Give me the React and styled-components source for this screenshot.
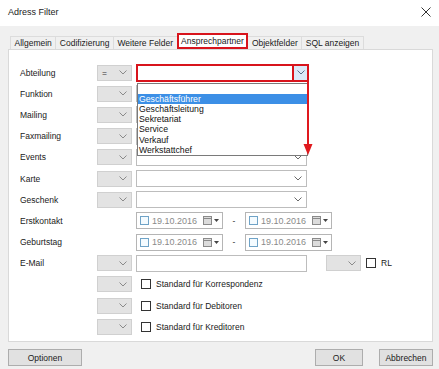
import React from 'react';
import styled, { createGlobalStyle } from 'styled-components';

const GlobalStyle = createGlobalStyle`
  html, body {
    margin: 0;
    padding: 0;
    background: #f0f0f0;
  }
  body {
    font-family: "Liberation Sans", Arial, sans-serif;
    font-size: 8.5px;
    color: #1a1a1a;
  }
`;

const TABS = ['Allgemein', 'Codifizierung', 'Weitere Felder', 'Ansprechpartner', 'Objektfelder', 'SQL anzeigen'];
const ABTEILUNGEN = ['', 'Geschäftsführer', 'Geschäftsleitung', 'Sekretariat', 'Service', 'Verkauf', 'Werkstattchef'];

function Chevron({ color }) {
  return (
    <svg width="8" height="5" viewBox="0 0 8 5">
      <path d="M0.5 0.5 L4 4 L7.5 0.5" fill="none" stroke={color || '#6a6a6a'} strokeWidth="1" />
    </svg>
  );
}

function CalendarIcon() {
  return (
    <CalWrap>
      <svg width="9" height="9" viewBox="0 0 9 9">
        <rect x="0.5" y="0.5" width="8" height="8" fill="#dcdcdc" stroke="#8a8a8a" />
        <line x1="0.5" y1="2.5" x2="8.5" y2="2.5" stroke="#8a8a8a" />
      </svg>
      <svg width="5" height="3" viewBox="0 0 5 3">
        <path d="M0 0 L5 0 L2.5 3 Z" fill="#444" />
      </svg>
    </CalWrap>
  );
}

function OpCombo({ value }) {
  return (
    <GrayCombo>
      <span>{value}</span>
      <Chevron color="#8a8a8a" />
    </GrayCombo>
  );
}

function DateBox() {
  return (
    <DateField>
      <SmallCheck $blue />
      <DateText>19.10.2016</DateText>
      <CalendarIcon />
    </DateField>
  );
}

function Row({ label, op, children }) {
  return (
    <>
      <Label>{label}</Label>
      {op === null ? <span /> : <OpCombo value={op} />}
      <Field>{children}</Field>
    </>
  );
}

export default function App() {
  return (
    <Window>
      <GlobalStyle />
      <TitleBar>
        <Title>Adress Filter</Title>
        <svg width="10" height="10" viewBox="0 0 10 10">
          <path d="M0.5 0.5 L9.5 9.5 M9.5 0.5 L0.5 9.5" stroke="#333" strokeWidth="1" />
        </svg>
      </TitleBar>
      <Body>
        <TabStrip>
          {TABS.map((t) => (
            <Tab key={t} $active={t === 'Ansprechpartner'}>{t}</Tab>
          ))}
        </TabStrip>
        <Panel>
          <Form>
            <Row label="Abteilung" op="=">
              <Highlighted>
                <RedInput />
                <RedButton><Chevron color="#5a6f8a" /></RedButton>
                <DropList>
                  {ABTEILUNGEN.map((a, i) => (
                    <DropItem key={a || i} $selected={i === 1}>{a}</DropItem>
                  ))}
                </DropList>
                <Arrow width="12" height="76" viewBox="0 0 12 76">
                  <line x1="6" y1="0" x2="6" y2="66" stroke="#e0191e" strokeWidth="2" />
                  <path d="M1.5 62 L10.5 62 L6 73 Z" fill="#e0191e" />
                </Arrow>
              </Highlighted>
            </Row>
            <Row label="Funktion" op=""><WhiteCombo><span /><Chevron /></WhiteCombo></Row>
            <Row label="Mailing" op=""><WhiteCombo><span /><Chevron /></WhiteCombo></Row>
            <Row label="Faxmailing" op=""><WhiteCombo><span /><Chevron /></WhiteCombo></Row>
            <Row label="Events" op=""><WhiteCombo><span /><Chevron /></WhiteCombo></Row>
            <Row label="Karte" op=""><WhiteCombo><span /><Chevron /></WhiteCombo></Row>
            <Row label="Geschenk" op=""><WhiteCombo><span /><Chevron /></WhiteCombo></Row>
            <Row label="Erstkontakt" op={null}>
              <DateRange><DateBox /><Dash>-</Dash><DateBox /></DateRange>
            </Row>
            <Row label="Geburtstag" op={null}>
              <DateRange><DateBox /><Dash>-</Dash><DateBox /></DateRange>
            </Row>
            <Row label="E-Mail" op="">
              <MailLine>
                <TextInput />
                <SmallGray><Chevron color="#8a8a8a" /></SmallGray>
                <CheckLabel><Box />RL</CheckLabel>
              </MailLine>
            </Row>
            <Row label="" op=""><CheckLabel><Box />Standard für Korrespondenz</CheckLabel></Row>
            <Row label="" op=""><CheckLabel><Box />Standard für Debitoren</CheckLabel></Row>
            <Row label="" op=""><CheckLabel><Box />Standard für Kreditoren</CheckLabel></Row>
          </Form>
        </Panel>
        <Footer>
          <Button $w={74}>Optionen</Button>
          <RightButtons>
            <Button $w={48}>OK</Button>
            <Button $w={54}>Abbrechen</Button>
          </RightButtons>
        </Footer>
      </Body>
    </Window>
  );
}

const Window = styled.div`
  width: 439px;
  height: 369px;
  display: flex;
  flex-direction: column;
  overflow: hidden;
`;

const TitleBar = styled.div`
  height: 26px;
  background: #ffffff;
  display: flex;
  align-items: center;
  justify-content: space-between;
  padding: 0 8px 2px 8px;
  box-sizing: border-box;
`;

const Title = styled.div`
  font-size: 9px;
  color: #222;
`;

const Body = styled.div`
  flex: 1;
  display: flex;
  flex-direction: column;
  padding: 0 6px 0 8px;
`;

const TabStrip = styled.div`
  height: 23px;
  display: flex;
  align-items: flex-end;
  padding-left: 2px;
`;

const Tab = styled.div`
  height: ${(p) => (p.$active ? '16px' : '13px')};
  line-height: 13px;
  padding: 0 ${(p) => (p.$active ? '2.5px' : '3.5px')};
  box-sizing: border-box;
  background: ${(p) => (p.$active ? '#ffffff' : '#f0f0f0')};
  border: ${(p) => (p.$active ? '2px solid #d8141c' : '1px solid #dcdcdc')};
  border-bottom: ${(p) => (p.$active ? '2px solid #d8141c' : 'none')};
  margin-right: -1px;
  white-space: nowrap;
  color: #1a1a1a;
  position: relative;
  z-index: ${(p) => (p.$active ? 2 : 1)};
`;

const Panel = styled.div`
  height: 293px;
  background: #ffffff;
  border: 1px solid #d9d9d9;
  box-sizing: border-box;
  padding: 12px 0 0 11px;
`;

const Form = styled.div`
  display: grid;
  grid-template-columns: 73px 35px 1fr;
  grid-auto-rows: 21.2px;
  column-gap: 4px;
  align-items: center;
`;

const Label = styled.div`
  color: #1a1a1a;
  white-space: nowrap;
`;

const Field = styled.div`
  display: flex;
  align-items: center;
`;

const GrayCombo = styled.div`
  height: 16px;
  background: #e3e3e3;
  border: 1px solid #d0d0d0;
  box-sizing: border-box;
  display: flex;
  align-items: center;
  justify-content: space-between;
  padding: 0 4px 0 4px;
  color: #333;
`;

const WhiteCombo = styled.div`
  width: 171px;
  height: 17px;
  background: #ffffff;
  border: 1px solid #bdbdbd;
  box-sizing: border-box;
  display: flex;
  align-items: center;
  justify-content: space-between;
  padding: 0 4px;
`;

const Highlighted = styled.div`
  position: relative;
  width: 173px;
  height: 18px;
  display: flex;
`;

const RedInput = styled.div`
  flex: 1;
  border: 2px solid #d8141c;
  background: #fff;
`;

const RedButton = styled.div`
  width: 13px;
  border: 2px solid #d8141c;
  border-left: none;
  background: #dbe9f8;
  display: flex;
  align-items: center;
  justify-content: center;
`;

const DropList = styled.div`
  position: absolute;
  top: 19px;
  left: 1px;
  width: 171px;
  height: 73px;
  box-sizing: border-box;
  background: #ffffff;
  border: 1px solid #7a7a7a;
  z-index: 5;
`;

const DropItem = styled.div`
  height: 10.2px;
  line-height: 10.2px;
  font-size: 8.7px;
  padding-left: 1px;
  background: ${(p) => (p.$selected ? '#3c8fe6' : 'transparent')};
  color: ${(p) => (p.$selected ? '#ffffff' : '#111')};
`;

const Arrow = styled.svg`
  position: absolute;
  left: 166px;
  top: 18px;
  z-index: 6;
`;

const DateRange = styled.div`
  display: flex;
  align-items: center;
`;

const DateField = styled.div`
  width: 87px;
  height: 17px;
  box-sizing: border-box;
  border: 1px solid #b5b5b5;
  background: #fff;
  display: flex;
  align-items: center;
  padding: 0 3px 0 3px;
`;

const DateText = styled.span`
  color: #8a8a8a;
  font-size: 9px;
  margin-left: 3px;
  flex: 1;
`;

const CalWrap = styled.span`
  display: flex;
  align-items: center;
  gap: 2px;
`;

const Dash = styled.span`
  width: 22px;
  text-align: center;
  color: #333;
`;

const SmallCheck = styled.span`
  width: 9px;
  height: 9px;
  box-sizing: border-box;
  border: 1px solid ${(p) => (p.$blue ? '#6fa3c7' : '#333')};
  background: ${(p) => (p.$blue ? '#f4fbff' : '#fff')};
`;

const MailLine = styled.div`
  display: flex;
  align-items: center;
`;

const TextInput = styled.div`
  width: 171px;
  height: 17px;
  box-sizing: border-box;
  border: 1px solid #bdbdbd;
  background: #fff;
`;

const SmallGray = styled.div`
  width: 35px;
  height: 16px;
  margin-left: 19px;
  box-sizing: border-box;
  background: #e3e3e3;
  border: 1px solid #d0d0d0;
  display: flex;
  align-items: center;
  justify-content: flex-end;
  padding-right: 4px;
`;

const CheckLabel = styled.label`
  display: flex;
  align-items: center;
  gap: 5px;
  margin-left: 5px;
  white-space: nowrap;
  color: #1a1a1a;
`;

const Box = styled.span`
  width: 10px;
  height: 10px;
  box-sizing: border-box;
  border: 1px solid #333;
  background: #fff;
`;

const Footer = styled.div`
  display: flex;
  justify-content: space-between;
  align-items: center;
  padding-top: 7px;
`;

const RightButtons = styled.div`
  display: flex;
  gap: 16px;
`;

const Button = styled.button`
  width: ${(p) => p.$w}px;
  height: 17px;
  padding: 0;
  background: #e1e1e1;
  border: 1px solid #adadad;
  font-family: "Liberation Sans", Arial, sans-serif;
  font-size: 8.5px;
  color: #1a1a1a;
`;
